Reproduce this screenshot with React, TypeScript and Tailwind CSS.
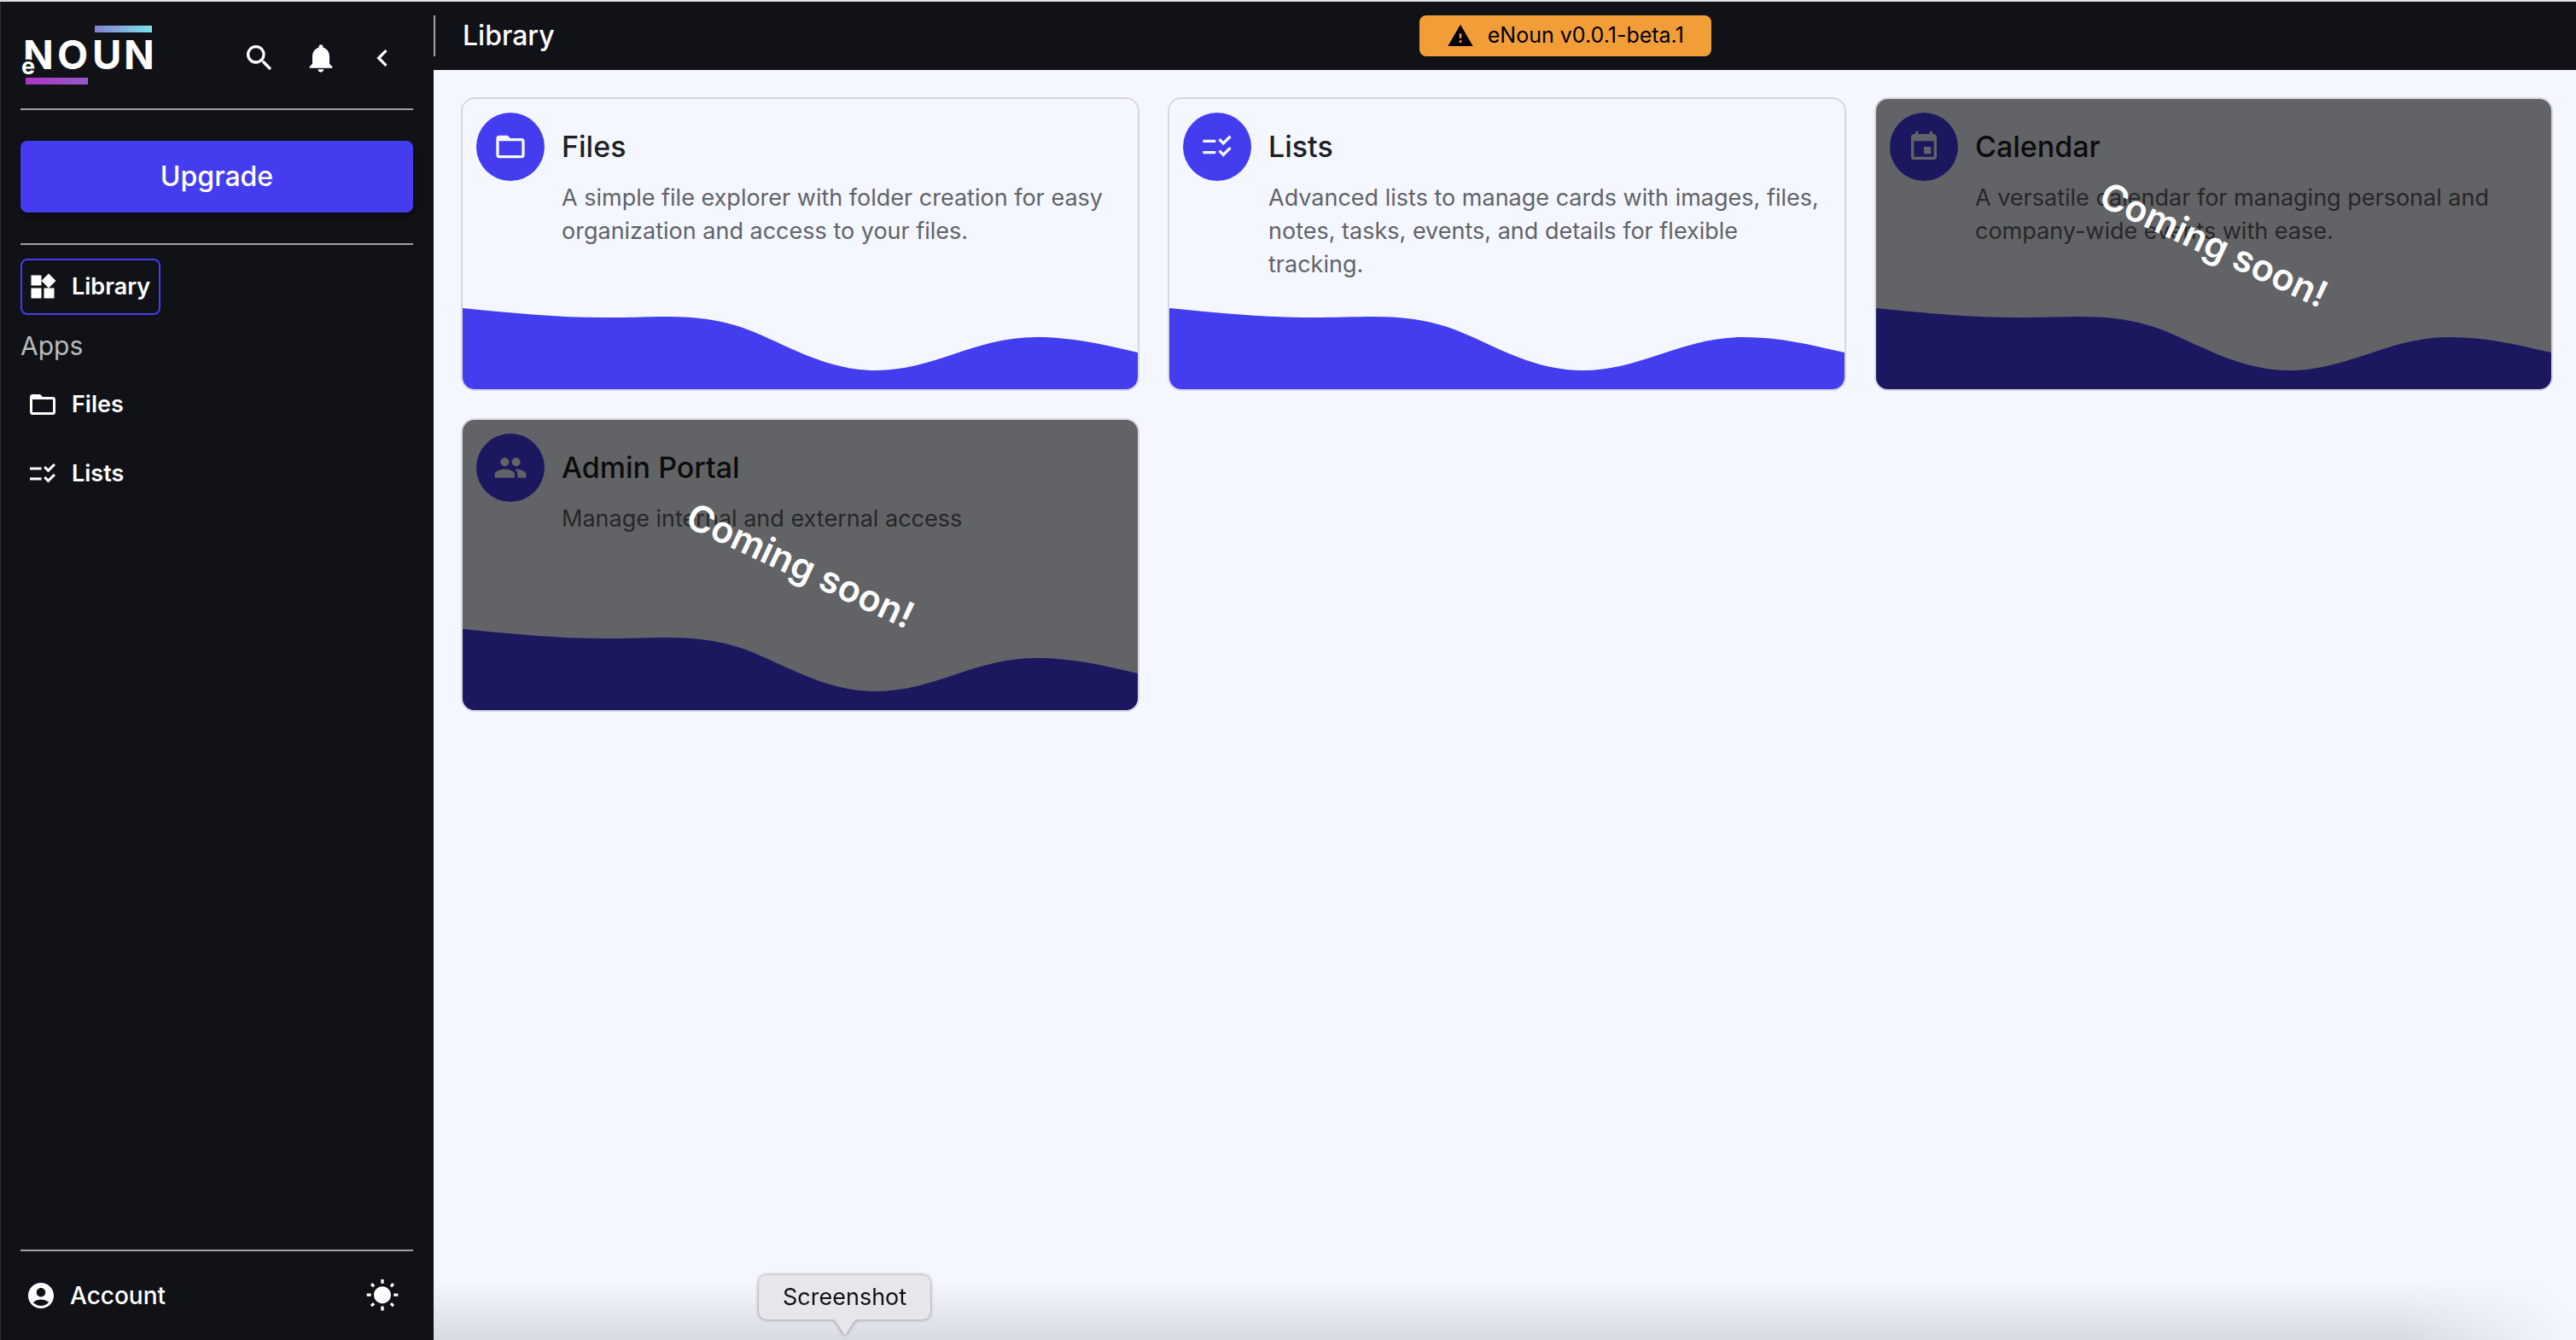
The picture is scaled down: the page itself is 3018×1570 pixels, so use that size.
import type { ComponentType } from "react";
import {
  MdAccountCircle,
  MdChecklistRtl,
  MdChevronLeft,
  MdFolderOpen,
  MdEvent,
  MdGroup,
  MdNotifications,
  MdSearch,
  MdWarning,
  MdWbSunny,
  MdWidgets,
} from "react-icons/md";

type Icon = ComponentType<{ className?: string }>;

type AppCard = {
  title: string;
  description: string;
  icon: Icon;
  comingSoon?: boolean;
};

const cards: AppCard[] = [
  {
    title: "Files",
    description: "A simple file explorer with folder creation for easy organization and access to your files.",
    icon: MdFolderOpen,
  },
  {
    title: "Lists",
    description:
      "Advanced lists to manage cards with images, files, notes, tasks, events, and details for flexible tracking.",
    icon: MdChecklistRtl,
  },
  {
    title: "Calendar",
    description: "A versatile calendar for managing personal and company-wide events with ease.",
    icon: MdEvent,
    comingSoon: true,
  },
  {
    title: "Admin Portal",
    description: "Manage internal and external access",
    icon: MdGroup,
    comingSoon: true,
  },
];

function Logo() {
  return (
    <svg viewBox="0 0 156 72" className="h-18 w-39" role="img" aria-label="eNoun">
      <defs>
        <linearGradient id="logo-top" x1="0" x2="1">
          <stop offset="0" stopColor="#8680d3" />
          <stop offset="1" stopColor="#79e3ea" />
        </linearGradient>
        <linearGradient id="logo-bottom" x1="0" x2="1">
          <stop offset="0" stopColor="#ae33c4" />
          <stop offset="1" stopColor="#935bc9" />
        </linearGradient>
      </defs>
      <rect x="87" y="0" width="67" height="8" fill="url(#logo-top)" />
      <rect x="6" y="61" width="73" height="8" fill="url(#logo-bottom)" />
      <text x="3 43 84 121" y="51" fontSize="47" fontWeight="700" fill="#fff">
        NOUN
      </text>
      <text x="1" y="57" fontSize="27" fontWeight="700" fill="#fff" stroke="#111217" strokeWidth="5" paintOrder="stroke">
        e
      </text>
    </svg>
  );
}

function IconButton({ icon: Glyph, label }: { icon: Icon; label: string }) {
  return (
    <button type="button" aria-label={label} className="flex size-18 items-center justify-center">
      <Glyph className="size-10" />
    </button>
  );
}

function NavItem({ icon: Glyph, label, active }: { icon: Icon; label: string; active?: boolean }) {
  return (
    <a
      href="#"
      aria-current={active ? "page" : undefined}
      className={
        active
          ? "flex h-[66px] items-center gap-4 self-start rounded-lg border-2 border-[#443df0] px-1.5 pr-2.5"
          : "flex h-[66px] items-center gap-4 self-start rounded-lg border-2 border-transparent px-1.5 pr-2.5"
      }
    >
      <Glyph className="size-9" />
      <span className="text-[27px] font-semibold">{label}</span>
    </a>
  );
}

function Sidebar() {
  return (
    <aside className="flex w-[508px] shrink-0 flex-col border-l border-[#2b2c30] bg-[#111217] pr-6 pl-[23px] text-white">
      <div className="flex h-[125px] items-start justify-between pt-7">
        <Logo />
        <div className="flex pt-0.5">
          <IconButton icon={MdSearch} label="Search" />
          <IconButton icon={MdNotifications} label="Notifications" />
          <IconButton icon={MdChevronLeft} label="Collapse sidebar" />
        </div>
      </div>
      <hr className="border-t-2 border-[#a0a0a3]" />
      <button
        type="button"
        className="my-9 h-21 rounded-lg bg-[#443df0] text-[32px] font-medium shadow-[0_3px_6px_rgba(0,0,0,0.5)]"
      >
        Upgrade
      </button>
      <hr className="border-t-2 border-[#a0a0a3]" />
      <nav className="mt-4 flex flex-col">
        <NavItem icon={MdWidgets} label="Library" active />
        <h2 className="mt-4 text-[30px] leading-10 text-[#bbbbbc]">Apps</h2>
        <div className="mt-4 flex flex-col gap-[15px]">
          <NavItem icon={MdFolderOpen} label="Files" />
          <NavItem icon={MdChecklistRtl} label="Lists" />
        </div>
      </nav>
      <div className="mt-auto">
        <hr className="border-t-2 border-[#a0a0a3]" />
        <div className="flex h-26 items-center justify-between">
          <a href="#" className="flex items-center gap-4 pl-1.5">
            <MdAccountCircle className="size-9" />
            <span className="text-[28px] font-medium">Account</span>
          </a>
          <IconButton icon={MdWbSunny} label="Toggle theme" />
        </div>
      </div>
    </aside>
  );
}

function Header() {
  return (
    <header className="flex h-20 items-center bg-[#111217] text-white">
      <div className="h-12 w-0.5 bg-[#a0a0a3]" />
      <h1 className="pl-8 text-[32px] font-medium">Library</h1>
      <div className="flex flex-1 justify-center">
        <div className="flex h-12 items-center gap-4 rounded-lg bg-[#f19e38] px-8 text-black">
          <MdWarning className="size-8" />
          <span className="text-[25px]">eNoun v0.0.1-beta.1</span>
        </div>
      </div>
    </header>
  );
}

function Card({ title, description, icon: Glyph, comingSoon }: AppCard) {
  return (
    <article className="relative flex h-[344px] flex-col overflow-hidden rounded-2xl border-2 border-[#d6d8de]">
      <div className="flex gap-5 p-4">
        <div className="flex size-20 shrink-0 items-center justify-center rounded-full bg-[#443df0] text-[#f4f7ff]">
          <Glyph className="size-10" />
        </div>
        <div>
          <h2 className="text-[34px] leading-20 font-medium text-[#1e1f22]">{title}</h2>
          <p className="text-[27px] leading-[39px] text-[#626367]">{description}</p>
        </div>
      </div>
      <svg
        viewBox="0 0 790 95"
        preserveAspectRatio="none"
        className="mt-auto h-[95px] w-full shrink-0 fill-[#443df0]"
        aria-hidden="true"
      >
        <path d="M0 0C60 6 110 11 166 11C195 11 215 10 240 10C275 10 300 14 325 22C370 37 420 73 483 73C551 73 600 34 671 34C715 34 750 43 790 52V95H0Z" />
      </svg>
      {comingSoon && (
        <div className="absolute inset-0 flex items-center justify-center bg-black/60">
          <span className="rotate-25 text-[43px] font-semibold whitespace-nowrap text-white">Coming soon!</span>
        </div>
      )}
    </article>
  );
}

function DockTooltip() {
  return (
    <div role="tooltip" className="absolute bottom-6 left-[889px] drop-shadow-[0_0_2px_rgba(0,0,0,0.45)]">
      <div className="flex h-13 items-center rounded-[9px] bg-[#e6e7eb] px-7 text-[27px] text-[#111217]">Screenshot</div>
      <svg viewBox="0 0 32 18" className="absolute top-full left-1/2 h-[18px] w-8 -translate-x-1/2 fill-[#e6e7eb]" aria-hidden="true">
        <path d="M0 0C4 0 5 2 7 5L14 16Q16 19 18 16L25 5C27 2 28 0 32 0Z" />
      </svg>
    </div>
  );
}

export default function App() {
  return (
    <div className="relative flex min-h-screen flex-col bg-[#111217] font-[Inter,sans-serif]">
      <div className="h-0.5 bg-[#dfe1e4]" />
      <div className="flex flex-1">
        <Sidebar />
        <div className="flex min-w-0 flex-1 flex-col bg-[#f4f7ff]">
          <Header />
          <main className="relative flex-1 px-8 pt-8 pr-[27px]">
            <div className="grid grid-cols-3 gap-x-[33px] gap-y-8">
              {cards.map((card) => (
                <Card key={card.title} {...card} />
              ))}
            </div>
            <div className="pointer-events-none absolute inset-x-0 bottom-0 h-[70px] bg-linear-to-b from-transparent to-black/11 mask-r-from-[calc(100%-200px)] mask-r-to-100%" />
          </main>
        </div>
      </div>
      <DockTooltip />
    </div>
  );
}
